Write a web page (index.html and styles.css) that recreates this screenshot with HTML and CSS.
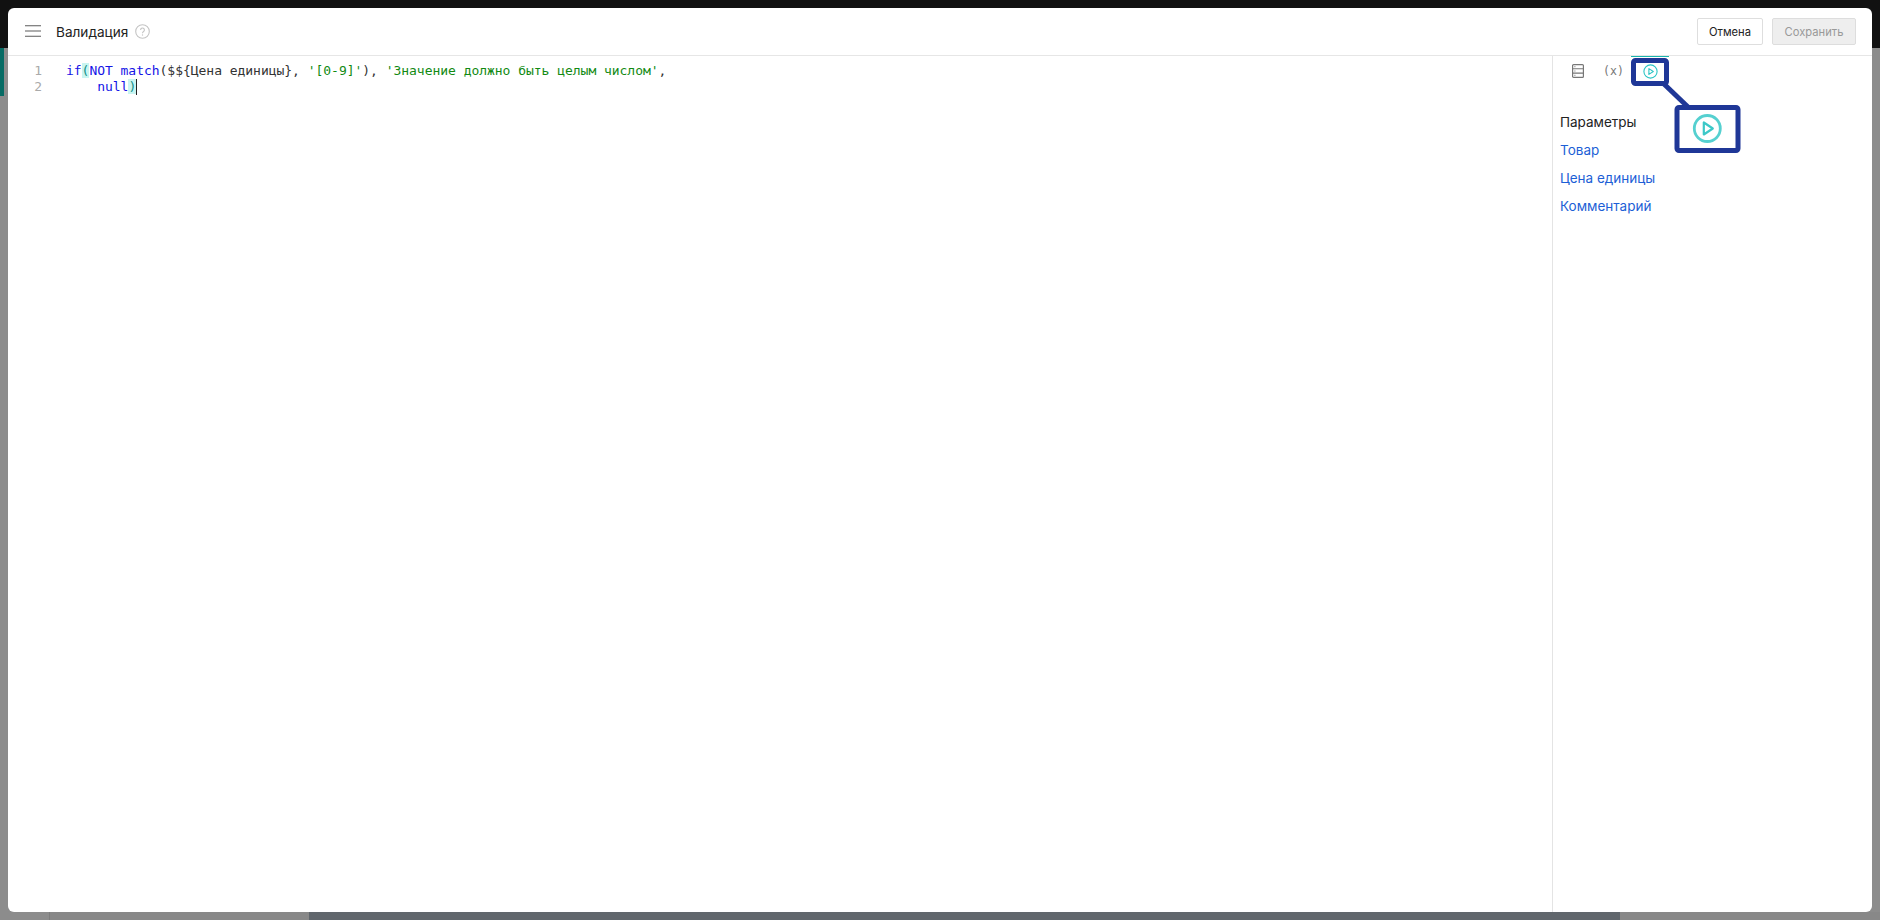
FILE: index.html
```html
<!DOCTYPE html>
<html lang="ru">
<head>
<meta charset="utf-8">
<title>Валидация</title>
<link rel="stylesheet" href="styles.css">
</head>
<body>
<div class="app">
  <div class="app-top"></div>
  <div class="app-main">
    <div class="app-rail"><div class="app-rail-item"></div></div>
  </div>
  <div class="app-bottom">
    <div class="app-bottom-nav"></div>
    <div class="app-bottom-left"></div>
    <div class="app-bottom-mid"></div>
    <div class="app-bottom-right"></div>
  </div>
</div>

<div class="modal">
  <header class="modal-header">
    <svg class="menu-icon" width="16" height="12" viewBox="0 0 16 12"><path d="M0 .75h16M0 6h16M0 11.25h16" stroke="#5c5c5c" stroke-width="1.1" fill="none"/></svg>
    <h1 class="modal-title">Валидация</h1>
    <svg class="help-icon" width="15" height="15" viewBox="0 0 15 15"><circle cx="7.5" cy="7.5" r="6.8" stroke="#c4c4c4" stroke-width="1.1" fill="none"/><path d="M5.6 5.9a1.9 1.9 0 1 1 3 1.6c-.7.5-1.1.8-1.1 1.7" stroke="#c4c4c4" stroke-width="1.1" fill="none"/><circle cx="7.5" cy="11" r=".7" fill="#c4c4c4"/></svg>
    <div class="modal-actions">
      <button class="btn btn-cancel">Отмена</button>
      <button class="btn btn-save" disabled>Сохранить</button>
    </div>
  </header>
  <div class="modal-body">
    <div class="editor">
      <div class="gutter"><div>1</div><div>2</div></div>
      <div class="code">
        <div class="code-line"><span class="kw">if</span><span class="match">(</span><span class="kw">NOT</span> <span class="kw">match</span>($${Цена единицы}, <span class="str">'[0-9]'</span>), <span class="str">'Значение должно быть целым числом'</span>,</div>
        <div class="code-line">    <span class="kw">null</span><span class="match">)</span><span class="cursor"></span></div>
      </div>
    </div>
    <aside class="side">
      <div class="tabs">
        <div class="tab">
          <svg width="12" height="14" viewBox="0 0 12 14"><rect x=".6" y=".6" width="10.8" height="12.8" rx="1" fill="none" stroke="#777" stroke-width="1.2"/><path d="M.6 4.8h10.8M.6 9.1h10.8" stroke="#777" stroke-width="1.1"/><path d="M2.4 2.7h1M2.4 7h1M2.4 11.3h1" stroke="#777" stroke-width="1"/></svg>
        </div>
        <div class="tab tab-vars">(x)</div>
        <div class="tab tab-active">
          <svg width="15" height="15" viewBox="0 0 15 15"><circle cx="7.5" cy="7.5" r="6.6" fill="none" stroke="#2cc5c5" stroke-width="1.1"/><path d="M5.9 4.6v5.8l4.4-2.9z" fill="none" stroke="#2cc5c5" stroke-width="1.1" stroke-linejoin="round"/></svg>
        </div>
      </div>
      <div class="params">
        <div class="params-title">Параметры</div>
        <a class="param-link">Товар</a>
        <a class="param-link">Цена единицы</a>
        <a class="param-link">Комментарий</a>
      </div>
    </aside>
  </div>
</div>

<svg class="callout" width="120" height="106" viewBox="0 0 120 106">
  <path d="M35 29 L59 52" stroke="#1f3797" stroke-width="5" fill="none"/>
  <rect x="4.5" y="5.5" width="33" height="23" rx="2" fill="none" stroke="#1f3797" stroke-width="5"/>
  <rect x="48" y="52.5" width="61" height="43" rx="2" fill="#fff" stroke="#1f3797" stroke-width="5"/>
  <circle cx="78.3" cy="73.5" r="13" fill="none" stroke="#55d0d0" stroke-width="2.8"/>
  <path d="M74.8 67.5v12l9-6z" fill="none" stroke="#3cc8c8" stroke-width="2.2" stroke-linejoin="round"/>
</svg>
</body>
</html>
```
FILE: styles.css
```css
* { box-sizing: border-box; }
html, body { margin: 0; height: 100%; overflow: hidden; }
body { font-family: Inter, Roboto, "Liberation Sans", sans-serif; background: #8a8a8a; }

.app { height: 920px; display: flex; flex-direction: column; }
.app-top { height: 48px; background: #111; flex: none; }
.app-main { flex: 1; background: #8c8c8c; display: flex; }
.app-rail { width: 8px; }
.app-rail-item { width: 4px; height: 48px; background: #066b64; }
.app-bottom { height: 8px; flex: none; display: flex; }
.app-bottom-nav { width: 50px; background: #8c8c8c; border-right: 1px solid #7d7d7d; }
.app-bottom-left { width: 259px; background: #888; }
.app-bottom-mid { width: 1311px; background: #60666c; }
.app-bottom-right { flex: 1; background: #888; }

.modal {
  position: absolute; left: 8px; top: 8px; width: 1864px; height: 904px;
  background: #fff; border-radius: 6px; display: flex; flex-direction: column; overflow: hidden;
}
.modal-header {
  height: 48px; flex: none; display: flex; align-items: center;
  border-bottom: 1px solid #e6e6e6; padding: 0 16px 0 17px;
}
.menu-icon { margin-top: -2px; }
.modal-title { margin: 0 0 0 15px; font-size: 13.6px; font-weight: 400; color: #222; }
.help-icon { margin-left: 7px; }
.modal-actions { margin-left: auto; display: flex; gap: 9px; }
.btn {
  height: 27px; padding: 0; font: inherit; font-size: 11.2px; border-radius: 2px; cursor: pointer;
}
.btn-cancel { width: 66px; background: #fff; border: 1px solid #dedede; color: #222; }
.btn-save { width: 84px; background: #eee; border: 1px solid #ddd; color: #999; }

.modal-body { flex: 1; display: flex; min-height: 0; }
.editor { flex: 1; display: flex; padding-top: 7px; font: 13px/16px "DejaVu Sans Mono", monospace; letter-spacing: -0.03px; }
.gutter { width: 34px; text-align: right; color: #aaa; flex: none; }
.code { margin-left: 24px; color: #333; }
.code-line { height: 16px; white-space: pre; }
.kw { color: #1414e6; }
.str { color: #128a12; }
.match { background: #c9f5f1; color: #118f88; }
.cursor { display: inline-block; width: 1px; height: 16px; background: #222; vertical-align: top; }

.side { width: 320px; flex: none; border-left: 1px solid #e4e4e4; }
.tabs { display: flex; height: 29px; padding-left: 7px; }
.tab { width: 36px; display: flex; align-items: center; justify-content: center; color: #777; }
.tab-vars { font: 11.5px "DejaVu Sans Mono", monospace; width: 35px; }
.tab-active { width: 38px; border-top: 1px solid #18b5ae; }
.params { padding: 23px 0 0 7px; display: flex; flex-direction: column; font-size: 13.5px; }
.params-title { height: 28px; line-height: 28px; color: #222; }
.param-link { height: 28px; line-height: 28px; color: #1d5fd6; }

.callout { position: absolute; left: 1629px; top: 55px; }
```
